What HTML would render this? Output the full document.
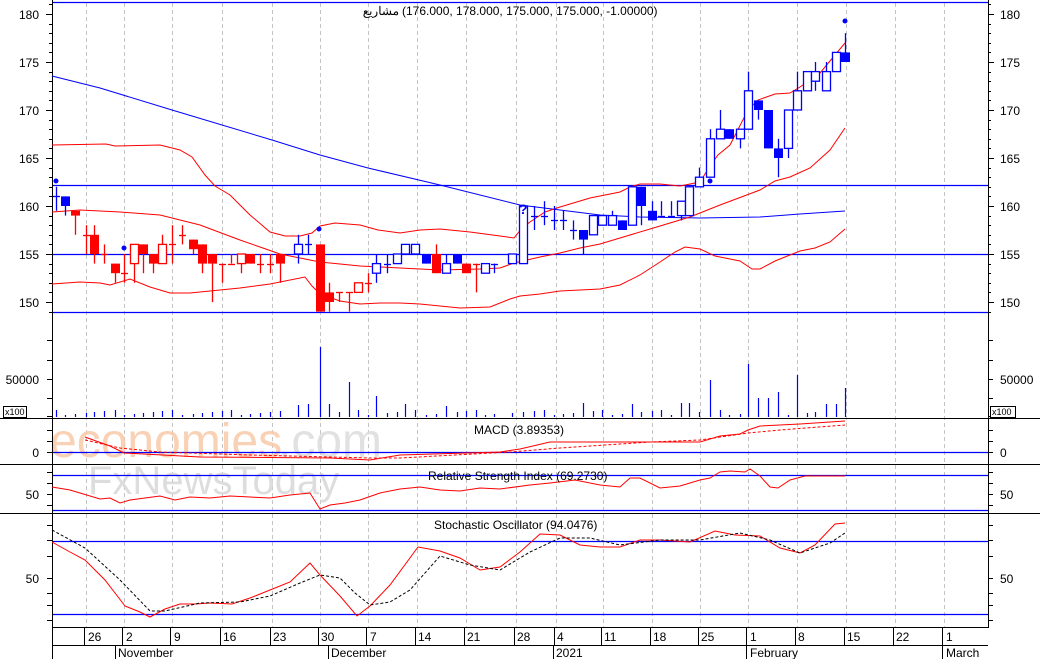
<!DOCTYPE html>
<html><head><meta charset="utf-8"><style>
html,body{margin:0;padding:0;background:#fff;}
svg{display:block;font-family:"Liberation Sans","Noto Sans CJK SC",sans-serif;}
</style></head><body>
<svg id="s" width="1040" height="659" viewBox="0 0 1040 659" xmlns="http://www.w3.org/2000/svg">
<rect width="1040" height="659" fill="#fff"/>
<g id="grid" stroke="#c4c4c4" stroke-dasharray="4,3" stroke-width="1"></g>
<text x="50" y="457" font-size="48" fill="#f9c9a8" opacity="0.85">economies</text>
<text x="278" y="457" font-size="48" fill="#dcdcdc" opacity="0.85">.com</text>
<text x="88" y="494" font-size="40" fill="#d8d8d8" opacity="0.85">FxNewsToday</text>
<g stroke="#0000ff" stroke-width="1.3">
<line x1="52" y1="2.5" x2="988" y2="2.5"/>
<line x1="52" y1="185.5" x2="988" y2="185.5"/>
<line x1="52" y1="254.5" x2="988" y2="254.5"/>
<line x1="52" y1="312.5" x2="988" y2="312.5"/>
<line x1="52" y1="452.5" x2="988" y2="452.5"/>
<line x1="52" y1="475.5" x2="988" y2="475.5"/>
<line x1="52" y1="510.5" x2="988" y2="510.5"/>
<line x1="52" y1="541.5" x2="988" y2="541.5"/>
<line x1="52" y1="614.5" x2="988" y2="614.5"/>
</g>
<g stroke="#000" stroke-width="1">
<line x1="0" y1="418.5" x2="1040" y2="418.5"/>
<line x1="0" y1="464.5" x2="1040" y2="464.5"/>
<line x1="0" y1="513.5" x2="1040" y2="513.5"/>
<line x1="52.5" y1="0" x2="52.5" y2="659"/>
<line x1="988.5" y1="0" x2="988.5" y2="628"/>
<line x1="52" y1="627.5" x2="988" y2="627.5"/>
<line x1="52" y1="645.5" x2="988" y2="645.5"/>
</g>
<g id="ticks" stroke="#000"></g>
<g id="lines" fill="none" stroke-width="1"></g>
<g id="candles"></g>
<g id="vol" stroke="#0000ff"></g>
<g fill="#0000ff">
<circle cx="56" cy="181" r="2.5"/><circle cx="124" cy="248" r="2.5"/><circle cx="319" cy="229" r="2.5"/><circle cx="710" cy="181" r="2.5"/><circle cx="845" cy="21" r="2.5"/>
</g>
<text x="519" y="214" font-size="14" font-weight="bold" fill="#0000ff">?</text>
<g font-size="12" fill="#000">
<text x="399" y="15" text-anchor="end">مشاريع</text>
<text x="402" y="15">(176.000, 178.000, 175.000, 175.000, -1.00000)</text>
<text x="474" y="434">MACD (3.89353)</text>
<text x="428" y="480">Relative Strength Index (69.2730)</text>
<text x="434" y="529">Stochastic Oscillator (94.0476)</text>
</g>
<g font-size="12" fill="#000" text-anchor="end">
<text x="39" y="19">180</text><text x="39" y="67">175</text><text x="39" y="115">170</text><text x="39" y="163">165</text><text x="39" y="211">160</text><text x="39" y="259">155</text><text x="39" y="307">150</text>
<text x="39" y="384">50000</text><text x="39" y="457">0</text><text x="39" y="499">50</text><text x="39" y="583">50</text>
</g>
<g font-size="12" fill="#000">
<text x="1000" y="19">180</text><text x="1000" y="67">175</text><text x="1000" y="115">170</text><text x="1000" y="163">165</text><text x="1000" y="211">160</text><text x="1000" y="259">155</text><text x="1000" y="307">150</text>
<text x="1000" y="384">50000</text><text x="1000" y="457">0</text><text x="1000" y="499">50</text><text x="1000" y="583">50</text>
</g>
<g font-size="9" fill="#000">
<rect x="3.5" y="406.5" width="23" height="11" fill="#fff" stroke="#000"/><text x="5" y="415">x100</text>
<rect x="990.5" y="406.5" width="25" height="11" fill="#fff" stroke="#000"/><text x="992" y="415">x100</text>
</g>
<g font-size="12" fill="#000" id="dates">
<text x="88" y="641">26</text><text x="126" y="641">2</text><text x="174" y="641">9</text><text x="223" y="641">16</text><text x="273" y="641">23</text><text x="321" y="641">30</text><text x="370" y="641">7</text><text x="418" y="641">14</text><text x="467" y="641">21</text><text x="517" y="641">28</text><text x="557" y="641">4</text><text x="604" y="641">11</text><text x="653" y="641">18</text><text x="701" y="641">25</text><text x="750" y="641">1</text><text x="798" y="641">8</text><text x="847" y="641">15</text><text x="896" y="641">22</text><text x="946" y="641">1</text>
<text x="118" y="657">November</text><text x="331" y="657">December</text><text x="556" y="657">2021</text><text x="750" y="657">February</text><text x="946" y="657">March</text>
</g>
<g stroke="#000" id="dticks"></g>
</svg>
<script>
var NS="http://www.w3.org/2000/svg",S=document.getElementById('s');
function el(p,t,a){var e=document.createElementNS(NS,t);for(var k in a)e.setAttribute(k,a[k]);document.getElementById(p).appendChild(e);return e;}
var wk=[86,124,172,222,272,320,368,417,466,516,556,603,652,700,748,797,846,895,944];
wk.forEach(function(x){el('grid','line',{x1:x+.5,y1:3,x2:x+.5,y2:627});el('dticks','line',{x1:x-1.5,y1:628,x2:x-1.5,y2:645});});
[115,328,553,746,942].forEach(function(x){el('dticks','line',{x1:x+.5,y1:645,x2:x+.5,y2:659});});
function Y(p){return 14+(180-p)*9.6;}
for(var p=149;p<=181;p++){var y=Math.round(Y(p))+.5,l=p%5==0?6:3;el('ticks','line',{x1:52-l,y1:y,x2:52,y2:y});el('ticks','line',{x1:988,y1:y,x2:988+l,y2:y});}
[340,360,379,398,416,430,441,452,472,483,494,505,525,540,556,578,593,605,620].forEach(function(y){el('ticks','line',{x1:47,y1:y+.5,x2:52,y2:y+.5});el('ticks','line',{x1:988,y1:y+.5,x2:993,y2:y+.5});});
function pl(pts,c,d){var a={points:pts.map(function(q){return q.join(',')}).join(' '),stroke:c};if(d)a['stroke-dasharray']=d;el('lines','polyline',a);}
pl([[52,76],[100,88],[172,110],[272,140],[320,155],[368,168],[440,185],[520,205],[560,210],[600,215],[640,217],[700,218],[760,217],[800,214],[845,211]],'#0000ff');
pl([[52,145],[106,144],[115,146],[160,145],[180,150],[192,157],[205,175],[215,186],[230,195],[250,215],[270,232],[285,236],[300,236],[312,233],[320,226],[335,223],[360,225],[378,230],[400,233],[420,230],[440,229],[470,232],[500,236],[514,238],[522,228],[530,222],[545,212],[560,207],[590,198],[620,192],[630,187],[640,184],[660,184],[680,186],[700,182],[710,166],[718,155],[730,145],[748,110],[758,100],[775,94],[790,93],[800,87],[820,73],[835,55],[845,43]],'#ff0000');
pl([[52,212],[80,210],[120,212],[160,215],[200,225],[240,240],[260,247],[280,254],[300,258],[320,262],[360,266],[400,268],[440,270],[480,269],[500,268],[514,263],[540,257],[560,253],[580,248],[600,244],[620,238],[660,226],[690,217],[720,205],[760,190],[775,181],[790,177],[810,168],[830,150],[845,128]],'#ff0000');
pl([[52,284],[80,282],[100,283],[110,285],[130,279],[150,287],[170,293],[190,293],[210,291],[240,288],[270,284],[305,277],[312,286],[320,294],[340,301],[360,304],[380,303],[400,303],[420,304],[460,308],[490,307],[510,299],[520,296],[540,294],[560,291],[600,289],[620,285],[640,275],[660,262],[675,252],[685,247],[700,249],[715,256],[740,261],[752,269],[760,269],[775,261],[790,255],[800,251],[815,248],[830,242],[845,229]],'#ff0000');
pl([[85,437],[110,446],[124,453],[200,457],[330,458],[370,460],[400,455],[500,452],[520,449],[550,442],[650,442],[700,442],[720,436],[740,434],[748,430],[760,426],[800,424],[845,421]],'#ff0000');
pl([[85,440],[120,448],[160,452],[250,455],[370,458],[400,458],[510,452],[560,448],[650,442],[700,440],[748,433],[780,430],[845,425]],'#ff0000','3,2');
pl([[52,487],[70,490],[100,499],[110,498],[120,503],[130,500],[145,498],[160,496],[175,500],[190,497],[210,498],[230,496],[250,497],[270,498],[290,495],[310,493],[320,509],[330,505],[345,503],[360,500],[380,493],[400,489],[420,487],[440,490],[460,491],[480,488],[500,489],[530,485],[550,483],[575,480],[600,485],[620,487],[630,478],[640,478],[660,488],[680,486],[700,480],[710,478],[720,472],[730,471],[745,472],[750,469],[760,476],[770,487],[778,488],[790,480],[805,476],[845,476]],'#ff0000');
pl([[52,542],[70,552],[85,560],[105,580],[125,606],[140,612],[150,617],[165,609],[180,604],[195,604],[210,603],[232,604],[250,598],[270,590],[290,582],[310,563],[320,575],[340,596],[357,616],[370,606],[390,585],[418,547],[440,551],[460,558],[480,570],[500,567],[520,552],[540,534],[560,535],[580,545],[600,547],[620,547],[640,540],[660,540],[690,542],[715,531],[735,535],[760,536],[780,548],[800,553],[815,545],[835,524],[845,523]],'#ff0000');
pl([[52,530],[85,548],[120,580],[150,611],[165,611],[200,603],[240,602],[270,596],[300,583],[320,575],[340,578],[355,593],[370,605],[390,602],[410,590],[440,556],[470,565],[500,570],[530,552],[560,538],[590,538],[620,545],[660,540],[700,540],[740,533],[770,540],[800,553],[830,543],[845,533]],'#000','3,2');
var C=[[56,161,162,159.5,161,'c'],[65,161,161,159,160,'f'],[75,159.5,159.5,157,159,'r'],[86,157,158,155,157,'rc'],[94,157,158,154,155,'r'],[104,155,156,154,155,'rc'],[115,154,154,152,153,'r'],[124,153,155,152,153,'rc'],[134,154,156,152,156,'rh'],[143,156,156,153,155,'r'],[153,155,155,153,154,'r'],[162,154,157,154,156,'rh'],[172,156,158,154,156,'rc'],[182,157,158,156,157,'rc'],[193,156.5,156.5,155,155.5,'r'],[202,156,156,153,154,'r'],[212,155,155,150,154,'r'],[222,154,154,152,154,'rc'],[231,154,155,154,154,'rc'],[241,154,155,153,155,'rh'],[250,155,155,154,154,'r'],[260,154,155,153,154,'rc'],[270,154,155,153,154,'rc'],[280,155,155,152,154,'r'],[298,155,157,154,156,'h'],[308,156,157,155,156,'c'],[320,156,156,149,149,'r'],[329,151,152,149,150,'r'],[339,151,151,150,151,'rc'],[349,151,151,149,151,'rc'],[358,151,152,151,152,'rh'],[368,152,153,151,152,'rc'],[376,153,155,152,154,'h'],[387,154,155,153,154,'c'],[397,154,155,154,155,'h'],[405,155,156,155,156,'h'],[415,155,156,155,156,'h'],[426,155,155,154,154,'f'],[436,155,156,153,153,'r'],[446,153,155,153,154,'h'],[457,155,155,154,154,'f'],[466,154,154,153,153,'r'],[476,154,154,151,154,'rc'],[485,153,154,153,154,'h'],[494,154,154,153,154,'c'],[512,154,155,154,155,'h'],[523,154,160,154,160,'h'],[534,159,160,157.5,159,'c'],[544,159,160.5,158,159,'c'],[554,158.5,160,157.5,158.5,'c'],[563,158.5,159.5,157.5,158.5,'c'],[573,157.5,158.5,156.5,157.5,'c'],[583,157.5,157.5,155,156.5,'f'],[593,157,159,157,159,'h'],[602,158,159,158,159,'h'],[612,158,159.5,158,159,'h'],[622,158.5,158.5,157.5,157.5,'f'],[632,158,162,158,162,'h'],[641,162,162,158,160,'f'],[652,159.5,160.5,158.5,158.5,'f'],[661,159,160.5,159,159,'c'],[671,159,160.5,159,159,'c'],[681,159,160.5,158.5,160.5,'h'],[689,159,162,159,162,'h'],[699,162,164,162,163,'h'],[710,163,168,163,167,'h'],[720,167,170,167,168,'h'],[729,168,168,167,167,'f'],[740,167,168,166,168,'h'],[748,168,174,168,172,'h'],[758,171,171,169,170,'f'],[768,170,170,166,166,'f'],[778,166,167,163,165,'f'],[788,166,170,165,170,'h'],[797,170,174,170,172,'h'],[807,172,174,172,174,'h'],[815,173,175,172,174,'h'],[826,172,175,172,174,'h'],[836,174,176,174,176,'h'],[845,176,178,175,175,'f']];
C.forEach(function(k){var x=k[0],o=k[1],h=k[2],l=k[3],c=k[4],t=k[5];var col=(t[0]=='r')?'#ff0000':'#0000ff';
el('candles','line',{x1:x+.5,y1:Y(h),x2:x+.5,y2:Y(l),stroke:col,'stroke-width':1.3});
var top=Y(Math.max(o,c)),bot=Y(Math.min(o,c));
if(t=='c'||t=='rc'){el('candles','line',{x1:x-3,y1:Math.round(top)+.5,x2:x+4,y2:Math.round(top)+.5,stroke:col,'stroke-width':1.3});}
else if(t=='h'||t=='rh'){el('candles','rect',{x:x-3.5,y:top,width:8,height:Math.max(bot-top,1),fill:'#fff',stroke:col,'stroke-width':1.3});}
else{el('candles','rect',{x:x-4,y:top,width:9,height:Math.max(bot-top,2),fill:col});}});
var V={320:347,349:382,376:396,536:368,546:391,710:380,719:382,748:364,797:375,845:388,583:403,298:405,308:404,329:404,405:404,424:408,446:406,632:404,681:403,689:403,758:398,768:398,778:392,808:407,826:404,836:404};
C.forEach(function(k,i){var x=k[0];var y=V[x]||(410+((i*5)%6));el('vol','line',{x1:x+.5,y1:y,x2:x+.5,y2:417,'stroke-width':1.2});});
</script>
</body></html>
